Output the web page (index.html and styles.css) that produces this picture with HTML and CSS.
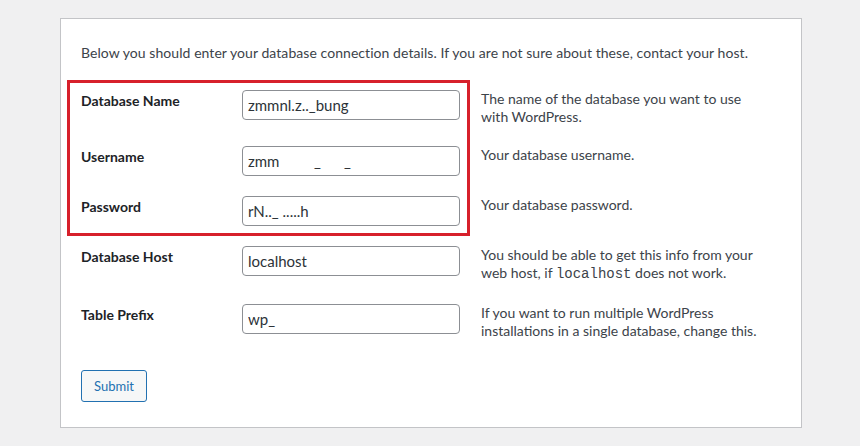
FILE: index.html
```html
<!DOCTYPE html>
<html lang="en">
<head>
<meta charset="utf-8">
<title>WordPress › Setup Configuration File</title>
<link rel="stylesheet" href="styles.css">
</head>
<body>
<form class="card" method="post" action="#">
  <p class="intro">Below you should enter your database connection details. If you are not sure about these, contact your host.</p>
  <div class="form-table">
    <div class="row">
      <label class="label" for="dbname">Database Name</label>
      <div class="field"><input id="dbname" class="input" type="text" value="zmmnl.z.._bung"></div>
      <div class="desc">The name of the database you want to use with WordPress.</div>
    </div>
    <div class="row">
      <label class="label" for="uname">Username</label>
      <div class="field"><input id="uname" class="input" type="text" value="zmm         _      _"></div>
      <div class="desc">Your database username.</div>
    </div>
    <div class="row">
      <label class="label" for="pwd">Password</label>
      <div class="field"><input id="pwd" class="input" type="text" value="rN.._ .....h"></div>
      <div class="desc">Your database password.</div>
    </div>
    <div class="row">
      <label class="label" for="dbhost">Database Host</label>
      <div class="field"><input id="dbhost" class="input" type="text" value="localhost"></div>
      <div class="desc">You should be able to get this info from your web host, if <code class="code">localhost</code> does not work.</div>
    </div>
    <div class="row">
      <label class="label" for="prefix">Table Prefix</label>
      <div class="field"><input id="prefix" class="input" type="text" value="wp_"></div>
      <div class="desc">If you want to run multiple WordPress installations in a single database, change this.</div>
    </div>
  </div>
  <div class="step"><button class="button" type="submit">Submit</button></div>
  <div class="highlight" aria-hidden="true"></div>
</form>
</body>
</html>
```
FILE: styles.css
```css
html, body {
  margin: 0;
  padding: 0;
}
body {
  background: #f0f0f1;
  font-family: "Lato", "Noto Sans", "DejaVu Sans", sans-serif;
  font-size: 14px;
  color: #3c434a;
  padding: 18px 58px 18px 60px;
}
.card {
  position: relative;
  display: block;
  width: 700px;
  background: #fff;
  border: 1px solid #c3c4c7;
  padding: 20px 20px 25px;
  margin: 0;
}
.intro {
  margin: 4px 0 18px;
  line-height: 19px;
  letter-spacing: 0.06px;
}
.form-table {
  display: flex;
  flex-direction: column;
}
.row {
  display: grid;
  grid-template-columns: 140px 218px 1fr;
  column-gap: 21px;
  align-items: start;
  padding: 10px 0;
}
.label {
  font-weight: 700;
  color: #1d2327;
  line-height: 19px;
  padding-top: 1px;
}
.input {
  box-sizing: border-box;
  width: 218px;
  height: 30px;
  border: 1px solid #8c8f94;
  border-radius: 4px;
  padding: 3px 5px;
  font-family: inherit;
  font-size: 15px;
  color: #2c3338;
  background: #fff;
  margin: 0;
}
.desc {
  line-height: 18px;
  padding-right: 20px;
}
.code {
  font-family: "Liberation Mono", "DejaVu Sans Mono", monospace;
  font-size: 14px;
  line-height: 20px;
}
.step {
  margin-top: 20px;
}
.button {
  height: 32px;
  padding: 0 12px;
  font-family: inherit;
  font-size: 13px;
  color: #2271b1;
  background: #f6f7f7;
  border: 1px solid #2271b1;
  border-radius: 3px;
}
.highlight {
  position: absolute;
  left: 6px;
  top: 61px;
  width: 403px;
  height: 156px;
  box-sizing: border-box;
  border: 3px solid #d7202b;
  pointer-events: none;
}
```
